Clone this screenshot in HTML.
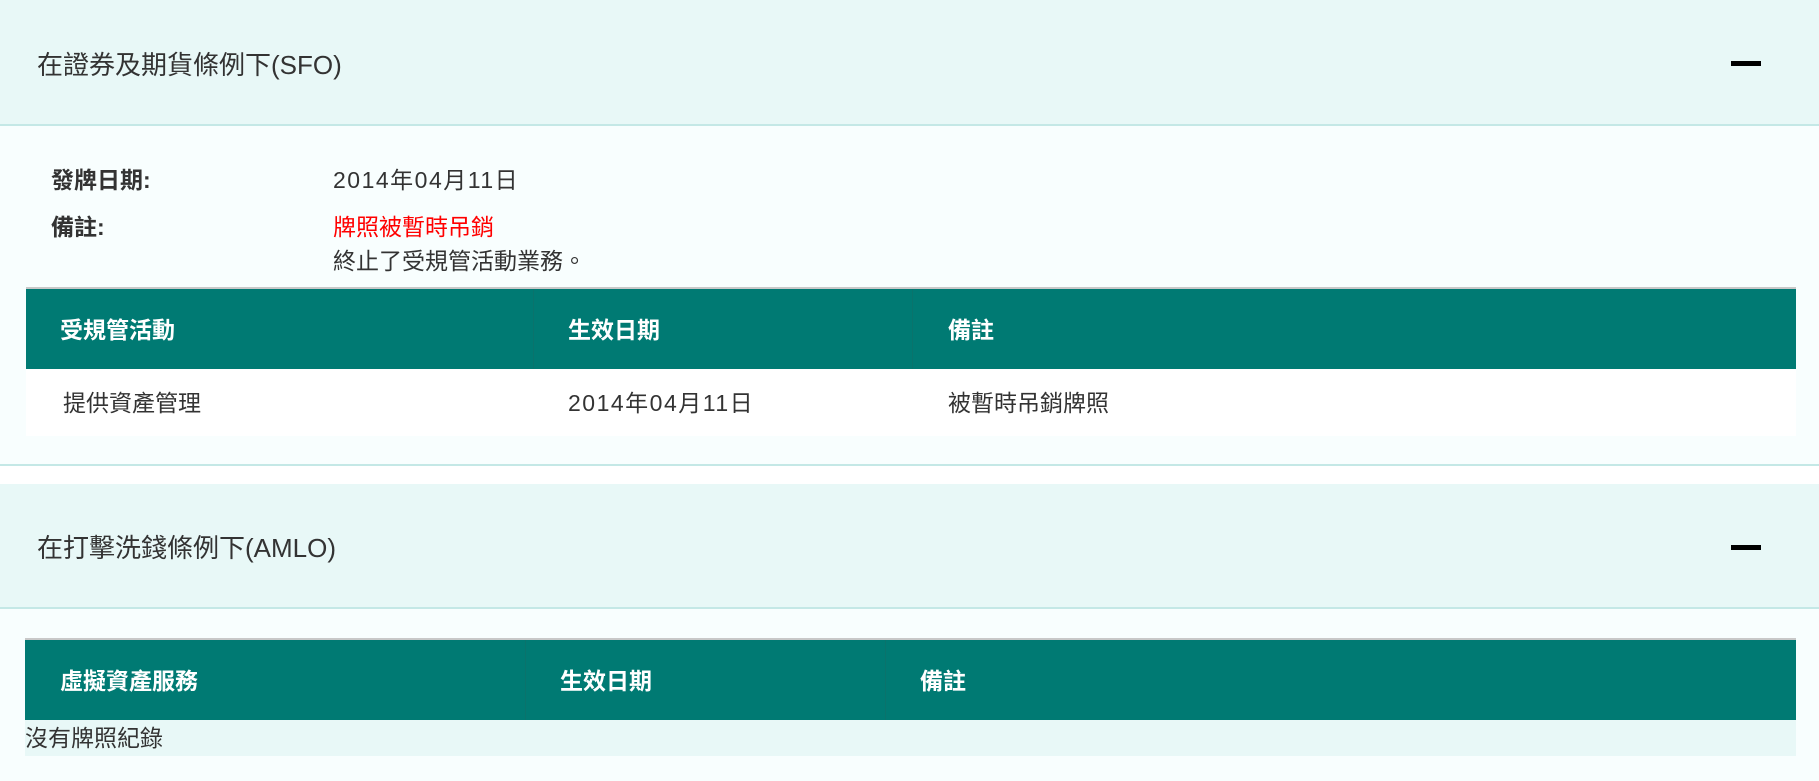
<!DOCTYPE html>
<html><head><meta charset="utf-8"><style>
*{margin:0;padding:0;box-sizing:border-box}
body{width:1819px;height:781px;background:#f8fefe;font-family:"Liberation Sans","Noto Sans CJK TC",sans-serif;color:#333;position:relative;overflow:hidden}
.hd{position:absolute;left:0;width:1819px;background:#e8f8f7;border-bottom:2px solid #c4e8e6}
.hd .t{position:absolute;left:37px;font-size:26px;line-height:32px;color:#333}
.hd .m{position:absolute;left:1731px;width:30px;height:5px;background:#000}
.a{position:absolute;font-size:23px;line-height:30px}
.n{letter-spacing:1.5px}
.b{font-weight:bold}
.th{position:absolute;left:26px;width:1770px;background:#007a73;border-top:2px solid #c8c8c8}
.th div,.tr div{position:absolute;font-size:23px;line-height:30px}
.th div{color:#fff;font-weight:bold}
.sep{position:absolute;top:0;bottom:0;width:1px;background:#0a736c}
</style></head><body>
<div class="hd" style="top:0;height:126px"><div class="t" style="top:49px">在證券及期貨條例下(SFO)</div><div class="m" style="top:61px"></div></div>
<div class="a b" style="left:51px;top:165px">發牌日期:</div>
<div class="a n" style="left:333px;top:165px">2014年04月11日</div>
<div class="a b" style="left:51px;top:212px">備註:</div>
<div class="a" style="left:333px;top:212px;color:#f00">牌照被暫時吊銷</div>
<div class="a" style="left:333px;top:246px">終止了受規管活動業務。</div>
<div class="th" style="top:287px;height:82px">
<div style="left:34px;top:26px">受規管活動</div><span class="sep" style="left:507px"></span>
<div style="left:542px;top:26px">生效日期</div><span class="sep" style="left:886px"></span>
<div style="left:922px;top:26px">備註</div></div>
<div class="tr" style="position:absolute;left:26px;top:369px;width:1770px;height:67px;background:#fff">
<div style="left:37px;top:19px">提供資產管理</div>
<div class="n" style="left:542px;top:19px">2014年04月11日</div>
<div style="left:922px;top:19px">被暫時吊銷牌照</div></div>
<div style="position:absolute;left:0;top:464px;width:1819px;height:2px;background:#c4e8e6"></div>
<div style="position:absolute;left:0;top:466px;width:1819px;height:18px;background:#fff"></div>
<div class="hd" style="top:484px;height:125px"><div class="t" style="top:48px">在打擊洗錢條例下(AMLO)</div><div class="m" style="top:61px"></div></div>
<div class="th" style="top:638px;height:82px;left:25px;width:1771px">
<div style="left:35px;top:26px">虛擬資產服務</div><span class="sep" style="left:500px"></span>
<div style="left:535px;top:26px">生效日期</div><span class="sep" style="left:860px"></span>
<div style="left:895px;top:26px">備註</div></div>
<div style="position:absolute;left:25px;top:720px;width:1771px;height:36px;background:#e8f8f7"><div class="a" style="left:0;top:3px">沒有牌照紀錄</div></div>
</body></html>
